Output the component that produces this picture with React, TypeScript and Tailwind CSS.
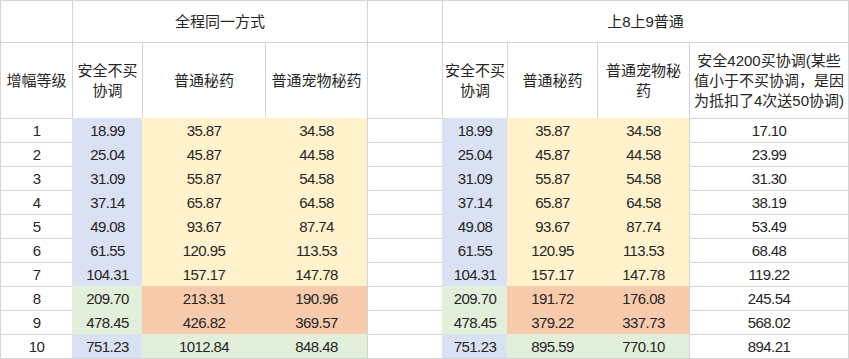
import React from 'react';

type Fill = 'w' | 'b' | 'y' | 'g' | 'o';

// fill covers the gridline on the cell's left/top, like in excel
const fillClass: Record<Fill, string> = {
    w: 'bg-white border-l-[#d4d4d4] border-t-[#d4d4d4]',
    b: 'bg-[#d9e1f2] border-l-[#d9e1f2] border-t-[#d9e1f2]',
    y: 'bg-[#fff2cc] border-l-[#fff2cc] border-t-[#fff2cc]',
    g: 'bg-[#e2efda] border-l-[#e2efda] border-t-[#e2efda]',
    o: 'bg-[#f8cbad] border-l-[#f8cbad] border-t-[#f8cbad]',
};

const left: string[][] = [
    ['18.99', '35.87', '34.58'],
    ['25.04', '45.87', '44.58'],
    ['31.09', '55.87', '54.58'],
    ['37.14', '65.87', '64.58'],
    ['49.08', '93.67', '87.74'],
    ['61.55', '120.95', '113.53'],
    ['104.31', '157.17', '147.78'],
    ['209.70', '213.31', '190.96'],
    ['478.45', '426.82', '369.57'],
    ['751.23', '1012.84', '848.48'],
];

const right: string[][] = [
    ['18.99', '35.87', '34.58', '17.10'],
    ['25.04', '45.87', '44.58', '23.99'],
    ['31.09', '55.87', '54.58', '31.30'],
    ['37.14', '65.87', '64.58', '38.19'],
    ['49.08', '93.67', '87.74', '53.49'],
    ['61.55', '120.95', '113.53', '68.48'],
    ['104.31', '157.17', '147.78', '119.22'],
    ['209.70', '191.72', '176.08', '245.54'],
    ['478.45', '379.22', '337.73', '568.02'],
    ['751.23', '895.59', '770.10', '894.21'],
];

const fillsFor = (lvl: number): Fill[] => {
    if (lvl <= 7) return ['b', 'y', 'y'];
    if (lvl <= 9) return ['g', 'o', 'o'];
    return ['b', 'g', 'g'];
};

const Cell: React.FC<{
    fill?: Fill;
    last?: boolean;
    bottom?: boolean;
    span?: string;
    num?: boolean;
    children?: React.ReactNode;
}> = ({ fill = 'w', last, bottom, span, num, children }) => (
    <div
        className={[
            'flex items-center justify-center border-l border-t text-center leading-5',
            fillClass[fill],
            last ? 'border-r border-r-[#d4d4d4]' : '',
            bottom ? 'border-b border-b-[#d4d4d4]' : '',
            span ?? '',
            num ? 'text-[15px] tracking-[-0.6px]' : 'text-[15px]',
        ].join(' ')}
    >
        {children}
    </div>
);

const App: React.FC = () => {
    return (
        <div className="min-h-screen bg-white">
            <div
                className="grid w-[849px] grid-cols-[72px_70px_123px_102px_75px_65px_90px_92px_160px] grid-rows-[42px_76px_repeat(9,24px)_25px] text-[#262626]"
                style={{ fontFamily: '"Liberation Sans", "Noto Sans CJK SC", sans-serif' }}
            >
                {/* header row 1 */}
                <Cell />
                <Cell span="col-span-3">全程同一方式</Cell>
                <Cell />
                <Cell span="col-span-4" last>
                    上8上9普通
                </Cell>

                {/* header row 2 */}
                <Cell>增幅等级</Cell>
                <Cell>
                    安全不买
                    <br />
                    协调
                </Cell>
                <Cell>普通秘药</Cell>
                <Cell>普通宠物秘药</Cell>
                <Cell />
                <Cell>
                    安全不买
                    <br />
                    协调
                </Cell>
                <Cell>普通秘药</Cell>
                <Cell>
                    普通宠物秘
                    <br />
                    药
                </Cell>
                <Cell last>
                    安全4200买协调(某些
                    <br />
                    值小于不买协调，是因
                    <br />
                    为抵扣了4次送50协调)
                </Cell>

                {left.map((row, i) => {
                    const lvl = i + 1;
                    const fills = fillsFor(lvl);
                    const bottom = lvl === 10;
                    return (
                        <React.Fragment key={lvl}>
                            <Cell bottom={bottom} num>
                                {lvl}
                            </Cell>
                            {row.map((v, j) => (
                                <Cell key={'l' + j} fill={fills[j]} bottom={bottom} num>
                                    {v}
                                </Cell>
                            ))}
                            <Cell bottom={bottom} />
                            {right[i].map((v, j) => (
                                <Cell
                                    key={'r' + j}
                                    fill={j < 3 ? fills[j] : 'w'}
                                    bottom={bottom}
                                    last={j === 3}
                                    num
                                >
                                    {v}
                                </Cell>
                            ))}
                        </React.Fragment>
                    );
                })}
            </div>
        </div>
    );
};

export default App;
